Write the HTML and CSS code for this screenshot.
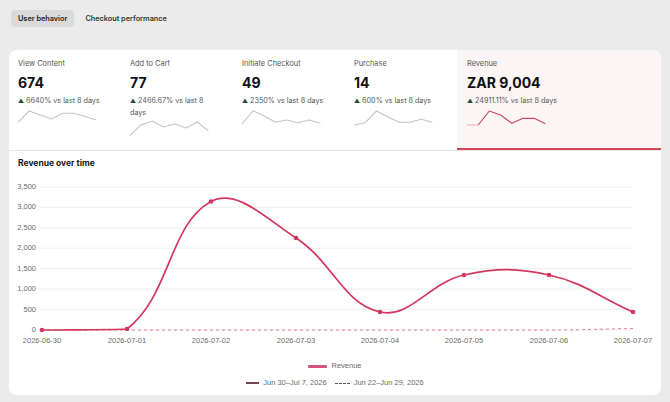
FILE: index.html
```html
<!DOCTYPE html>
<html lang="en">
<head>
    <meta charset="UTF-8">
    <meta name="viewport" content="width=device-width, initial-scale=1.0">
    <title>Store analytics</title>
    <link rel="stylesheet" href="styles.css">
</head>
<body>
    <div class="tabs">
        <button class="tab active">User behavior</button>
        <button class="tab">Checkout performance</button>
    </div>

    <div class="card">
        <div class="metrics">
            <div class="metric">
                <div class="metric-label">View Content</div>
                <div class="metric-value">674</div>
                <div class="metric-change"><span class="up">▲</span> 6640% vs last 8 days</div>
                <svg class="spark" viewBox="0 0 80 20">
                    <polyline points="0,16.3 11.2,5 22.4,9 33.6,13 44.8,7.3 56,7.3 67.2,10.5 78.4,14"/>
                </svg>
            </div>
            <div class="metric">
                <div class="metric-label">Add to Cart</div>
                <div class="metric-value">77</div>
                <div class="metric-change"><span class="up">▲</span> 2466.67% vs last 8 days</div>
                <svg class="spark" viewBox="0 0 80 20">
                    <polyline points="0,17.3 11.2,6.7 22.4,3.3 33.6,9 44.8,6 56,10 67.2,4 78.4,12.7"/>
                </svg>
            </div>
            <div class="metric">
                <div class="metric-label">Initiate Checkout</div>
                <div class="metric-value">49</div>
                <div class="metric-change"><span class="up">▲</span> 2350% vs last 8 days</div>
                <svg class="spark" viewBox="0 0 80 20">
                    <polyline points="0,18 11.2,4.7 22.4,10 33.6,16.3 44.8,14 56,16.7 67.2,14 78.4,17.3"/>
                </svg>
            </div>
            <div class="metric">
                <div class="metric-label">Purchase</div>
                <div class="metric-value">14</div>
                <div class="metric-change"><span class="up">▲</span> 600% vs last 8 days</div>
                <svg class="spark" viewBox="0 0 80 20">
                    <polyline points="0,19 11.2,16.7 22.4,5 33.6,10.7 44.8,16.3 56,16.3 67.2,13.3 78.4,16.3"/>
                </svg>
            </div>
            <div class="metric selected">
                <div class="metric-label">Revenue</div>
                <div class="metric-value">ZAR 9,004</div>
                <div class="metric-change"><span class="up">▲</span> 24911.11% vs last 8 days</div>
                <svg class="spark" viewBox="0 0 80 20">
                    <polyline class="faded" points="0,19 11.2,19"/>
                    <polyline points="11.2,19 22.4,5 33.6,9 44.8,17.3 56,12.3 67.2,12.3 78.4,17.7"/>
                </svg>
            </div>
        </div>

        <div class="chart">
            <div class="chart-title">Revenue over time</div>
            <!-- plot uses page-like coords: 0 sits at y=330, 500 per 20.43px, one day per 84.4px -->
            <svg class="plot" viewBox="9 172 652 180">
                <g class="grid">
                    <line x1="40" x2="633" y1="187" y2="187"/>
                    <line x1="40" x2="633" y1="207.4" y2="207.4"/>
                    <line x1="40" x2="633" y1="227.9" y2="227.9"/>
                    <line x1="40" x2="633" y1="248.3" y2="248.3"/>
                    <line x1="40" x2="633" y1="268.7" y2="268.7"/>
                    <line x1="40" x2="633" y1="289.1" y2="289.1"/>
                    <line x1="40" x2="633" y1="309.6" y2="309.6"/>
                    <line x1="40" x2="633" y1="330" y2="330"/>
                </g>
                <g class="y-labels">
                    <text x="36" y="187">3,500</text>
                    <text x="36" y="207.4">3,000</text>
                    <text x="36" y="227.9">2,500</text>
                    <text x="36" y="248.3">2,000</text>
                    <text x="36" y="268.7">1,500</text>
                    <text x="36" y="289.1">1,000</text>
                    <text x="36" y="309.6">500</text>
                    <text x="36" y="330">0</text>
                </g>
                <g class="x-labels">
                    <text x="42" y="341">2026-06-30</text>
                    <text x="127" y="341">2026-07-01</text>
                    <text x="211" y="341">2026-07-02</text>
                    <text x="296" y="341">2026-07-03</text>
                    <text x="380" y="341">2026-07-04</text>
                    <text x="464" y="341">2026-07-05</text>
                    <text x="549" y="341">2026-07-06</text>
                    <text x="633" y="341">2026-07-07</text>
                </g>
                <path class="prev-line" d="M42,330 L549,330 C584,330 600,329 633,328.5"/>
                <path class="rev-line" d="M42,330 C76,329.6 102.8,330 127,329 C170.4,296 168.9,224.2 211,201.5 C236.5,187.8 265.4,218 296,238 C333,262.2 343.1,303.9 380,312 C410.2,318.7 428.9,282.7 464,275 C496.5,267.9 516.5,267.9 549,275 C584.1,282.7 599.4,297.2 633,312"/>
                <g class="rev-points">
                    <circle cx="42" cy="330" r="2.3"/>
                    <circle cx="127" cy="329" r="2.3"/>
                    <circle cx="211" cy="201.5" r="2.3"/>
                    <circle cx="296" cy="238" r="2.3"/>
                    <circle cx="380" cy="312" r="2.3"/>
                    <circle cx="464" cy="275" r="2.3"/>
                    <circle cx="549" cy="275" r="2.3"/>
                    <circle cx="633" cy="312" r="2.3"/>
                </g>
            </svg>

            <div class="legend">
                <span class="key key-revenue"></span>Revenue
            </div>
            <div class="legend periods">
                <span class="period"><span class="key key-current"></span>Jun 30–Jul 7, 2026</span>
                <span class="period"><span class="key key-previous"></span>Jun 22–Jun 29, 2026</span>
            </div>
        </div>
    </div>
</body>
</html>
```

FILE: styles.css
```css
* {
    box-sizing: border-box;
}
html,
body {
    margin: 0;
    padding: 0;
    height: 100%;
    background-color: #ebebeb;
    font-family: Inter, 'Noto Sans', sans-serif;
    color: #1b1b1b;
}
body {
    padding: 10px 9px 0;
}

/* tabs */
.tabs {
    display: flex;
    gap: 4px;
    height: 17px;
    padding-left: 2px;
}
.tab {
    border: 0;
    background: transparent;
    font-family: inherit;
    font-size: 7.3px;
    font-weight: 600;
    color: #2b3732;
    padding: 0 7px;
    border-radius: 4px;
    cursor: pointer;
}
.tab.active {
    background-color: #dadada;
    color: #1c1c1c;
}

/* card */
.card {
    margin-top: 23px;
    width: 652px;
    background: #fff;
    border-radius: 8px;
    overflow: hidden;
    padding-bottom: 6px;
}

.metrics {
    display: grid;
    grid-template-columns: 112px 112px 112px 112px 1fr;
    height: 101px;
    border-bottom: 1px solid #e6e6e6;
}
.metric {
    padding: 8px 20px 0 9px;
}
.metric.selected {
    background-color: #fcf5f6;
    border-bottom: 2px solid #d04858;
    padding-left: 10px;
}
.metric-label {
    font-size: 7.4px;
    line-height: 12px;
    color: #555;
}
.metric-value {
    margin-top: 3px;
    font-size: 14px;
    line-height: 20px;
    font-weight: 700;
    color: #111;
}
.metric-change {
    margin-top: 2px;
    font-size: 7.2px;
    line-height: 12px;
    color: #555;
}
.up {
    color: #1f4d36;
    font-size: 6px;
}
.spark {
    display: block;
    width: 80px;
    height: 20px;
    margin-top: -1px;
    overflow: visible;
}
.spark polyline {
    fill: none;
    stroke: #c4c4c4;
    stroke-width: 1.1;
    stroke-linejoin: round;
}
.selected .spark polyline {
    stroke: #d0466c;
    stroke-width: 1.2;
}
.selected .spark polyline.faded {
    stroke: #eba5b8;
}

/* chart */
.chart-title {
    padding: 6px 9px 0;
    font-size: 8.5px;
    line-height: 12px;
    font-weight: 700;
    color: #141414;
}
.plot {
    display: block;
    width: 652px;
    height: 180px;
    margin-top: 3px;
}
.grid line {
    stroke: #ebebeb;
    stroke-width: 0.8;
}
.y-labels text,
.x-labels text {
    font-family: 'Liberation Sans', Arial, sans-serif;
    font-size: 7.5px;
    fill: #6b6b6b;
    dominant-baseline: middle;
}
.y-labels text {
    text-anchor: end;
}
.x-labels text {
    text-anchor: middle;
}
.rev-line {
    fill: none;
    stroke: #d2375f;
    stroke-width: 1.7;
}
.prev-line {
    fill: none;
    stroke: #e87d98;
    stroke-width: 1;
    stroke-dasharray: 3 3;
}
.rev-points circle {
    fill: #d2375f;
}

.legend {
    display: flex;
    justify-content: center;
    align-items: center;
    margin-top: 8px;
    font-family: 'Liberation Sans', Arial, sans-serif;
    font-size: 7.5px;
    line-height: 12px;
    color: #6b6b6b;
}
.legend.periods {
    margin-top: 5px;
    gap: 8px;
}
.period {
    display: flex;
    align-items: center;
}
.key {
    display: inline-block;
    margin-right: 4px;
}
.key-revenue {
    width: 19px;
    height: 3px;
    background-color: #d2557f;
    border-radius: 1px;
}
.key-current {
    width: 13px;
    height: 1.5px;
    background-color: #7a4257;
}
.key-previous {
    width: 15px;
    border-top: 1.5px dashed #555;
}
```
